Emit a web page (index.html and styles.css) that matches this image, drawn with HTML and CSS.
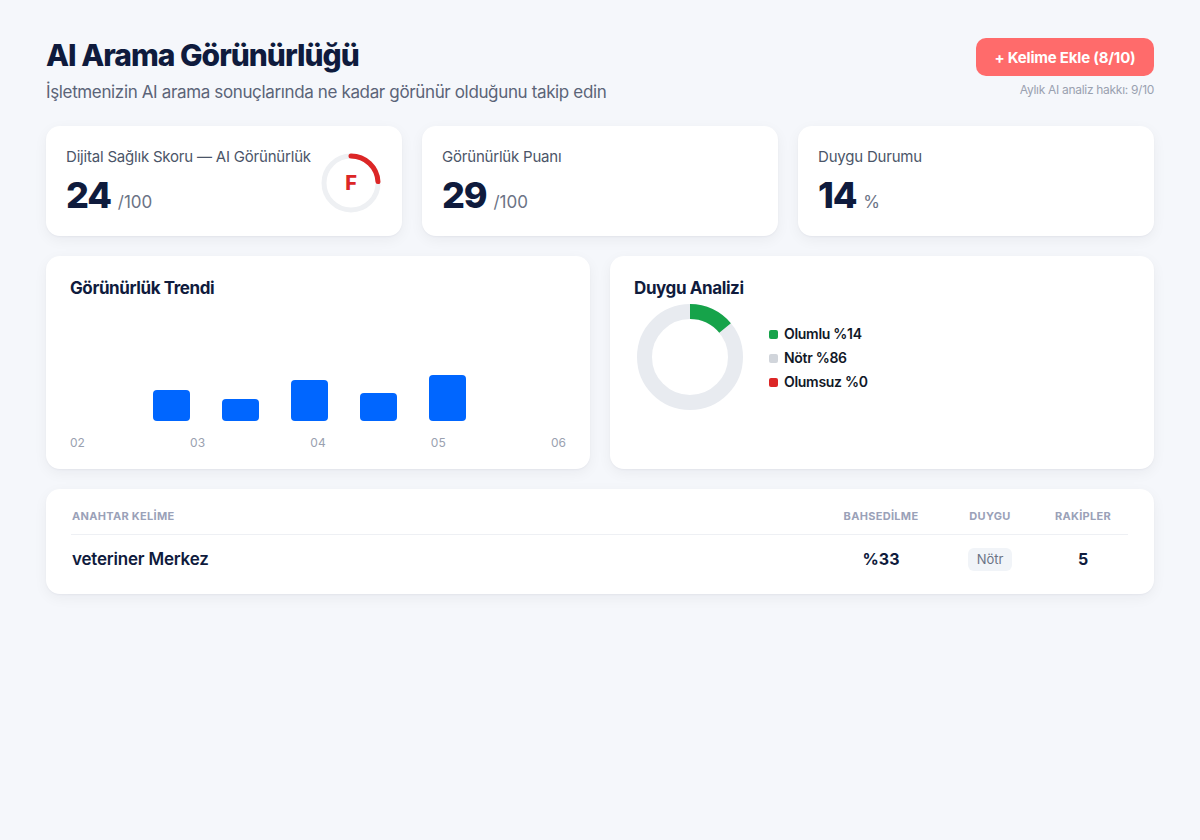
FILE: index.html
```html
<!DOCTYPE html>
<html lang="tr">
<head>
<meta charset="utf-8">
<title>AI Arama Görünürlüğü</title>
<link rel="stylesheet" href="styles.css">
</head>
<body>
<div class="page">
  <header class="top">
    <div class="titles">
      <h1 class="title">AI Arama Görünürlüğü</h1>
      <p class="subtitle">İşletmenizin AI arama sonuçlarında ne kadar görünür olduğunu takip edin</p>
    </div>
    <div class="actions">
      <button class="add-btn">+ Kelime Ekle (8/10)</button>
      <div class="quota">Aylık AI analiz hakkı: 9/10</div>
    </div>
  </header>

  <section class="stats">
    <div class="card stat">
      <div class="stat-body">
        <div class="stat-label">Dijital Sağlık Skoru — AI Görünürlük</div>
        <div class="stat-value"><span class="num">24</span><span class="unit">/100</span></div>
      </div>
      <div class="gauge">
        <svg width="62" height="62" viewBox="0 0 62 62">
          <circle cx="31" cy="31" r="27" fill="none" stroke="#eef0f3" stroke-width="5"/>
          <circle cx="31" cy="31" r="27" fill="none" stroke="#dc2626" stroke-width="5" stroke-linecap="round" stroke-dasharray="40.7 200" transform="rotate(-90 31 31)"/>
        </svg>
        <span class="grade">F</span>
      </div>
    </div>
    <div class="card stat">
      <div class="stat-body">
        <div class="stat-label">Görünürlük Puanı</div>
        <div class="stat-value"><span class="num">29</span><span class="unit">/100</span></div>
      </div>
    </div>
    <div class="card stat">
      <div class="stat-body">
        <div class="stat-label">Duygu Durumu</div>
        <div class="stat-value"><span class="num">14</span><span class="unit">%</span></div>
      </div>
    </div>
  </section>

  <section class="charts">
    <div class="card chart-card">
      <h2 class="card-title">Görünürlük Trendi</h2>
      <div class="bars">
        <div class="bar" style="height:31px"></div>
        <div class="bar" style="height:22px"></div>
        <div class="bar" style="height:41px"></div>
        <div class="bar" style="height:28px"></div>
        <div class="bar" style="height:46px"></div>
      </div>
      <div class="axis">
        <span>02</span><span>03</span><span>04</span><span>05</span><span>06</span>
      </div>
    </div>
    <div class="card chart-card">
      <h2 class="card-title">Duygu Analizi</h2>
      <div class="sentiment">
        <svg class="donut" width="106" height="106" viewBox="0 0 106 106">
          <circle cx="53" cy="53" r="45.5" fill="none" stroke="#e8ebf0" stroke-width="15"/>
          <circle cx="53" cy="53" r="45.5" fill="none" stroke="#16a34a" stroke-width="15" stroke-dasharray="40 300" transform="rotate(-90 53 53)"/>
        </svg>
        <ul class="legend">
          <li><span class="dot green"></span>Olumlu %14</li>
          <li><span class="dot grey"></span>Nötr %86</li>
          <li><span class="dot red"></span>Olumsuz %0</li>
        </ul>
      </div>
    </div>
  </section>

  <section class="card table-card">
    <div class="trow thead">
      <div class="c-key">ANAHTAR KELİME</div>
      <div class="c-mid">BAHSEDİLME</div>
      <div class="c-mid">DUYGU</div>
      <div class="c-mid">RAKİPLER</div>
    </div>
    <div class="trow tbody">
      <div class="c-key keyword">veteriner Merkez</div>
      <div class="c-mid strong">%33</div>
      <div class="c-mid"><span class="badge">Nötr</span></div>
      <div class="c-mid strong">5</div>
    </div>
  </section>
</div>
</body>
</html>
```
FILE: styles.css
```css
* { box-sizing: border-box; }
html, body { margin: 0; padding: 0; }
body {
  background: #f5f7fb;
  font-family: "Inter", "Noto Sans", sans-serif;
  color: #0f1b3d;
}
.page {
  width: 1200px;
  padding: 37px 46px 40px;
}
.top {
  display: flex;
  justify-content: space-between;
  align-items: flex-start;
}
.title {
  margin: 0;
  font-size: 30px;
  line-height: 36px;
  font-weight: 800;
  letter-spacing: -1px;
  color: #0f1b3d;
}
.subtitle {
  margin: 7px 0 0;
  font-size: 17px;
  line-height: 24px;
  color: #5b6478;
  letter-spacing: -0.36px;
}
.actions {
  display: flex;
  flex-direction: column;
  align-items: flex-end;
  padding-top: 1px;
}
.add-btn {
  width: 178px;
  height: 38px;
  border: none;
  border-radius: 10px;
  background: #ff6b6b;
  color: #fff;
  font-family: inherit;
  font-size: 15px;
  font-weight: 700;
  letter-spacing: -0.2px;
}
.quota {
  margin-top: 6px;
  font-size: 12px;
  line-height: 16px;
  color: #9aa1b0;
  letter-spacing: -0.3px;
}
.card {
  background: #fff;
  border-radius: 14px;
  box-shadow: 0 1px 2px rgba(16, 24, 40, 0.04), 0 4px 14px rgba(16, 24, 40, 0.05);
}
.stats {
  margin-top: 22px;
  display: grid;
  grid-template-columns: repeat(3, 1fr);
  gap: 20px;
}
.stat {
  height: 110px;
  padding: 21px 20px 0;
  display: flex;
  justify-content: space-between;
  align-items: flex-start;
}
.stat-label {
  font-size: 15px;
  line-height: 20px;
  color: #4b5568;
  letter-spacing: -0.2px;
}
.stat-value {
  margin-top: 8px;
  display: flex;
  align-items: baseline;
  gap: 7px;
  line-height: 40px;
}
.num {
  font-size: 36px;
  font-weight: 800;
  letter-spacing: -1.2px;
  color: #0f1b3d;
}
.unit {
  font-size: 17px;
  color: #6b7385;
}
.gauge {
  position: relative;
  width: 62px;
  height: 62px;
  margin-top: 5px;
}
.gauge svg { display: block; }
.grade {
  position: absolute;
  inset: 0;
  display: flex;
  align-items: center;
  justify-content: center;
  font-size: 20px;
  font-weight: 800;
  color: #dc2626;
}
.charts {
  margin-top: 20px;
  display: grid;
  grid-template-columns: 1fr 1fr;
  gap: 20px;
}
.chart-card {
  height: 213px;
  padding: 20px 24px 18px;
}
.card-title {
  margin: 0;
  font-size: 17px;
  line-height: 24px;
  font-weight: 700;
  letter-spacing: -0.4px;
  color: #0f1b3d;
}
.bars {
  height: 121px;
  display: flex;
  align-items: flex-end;
  gap: 32px;
  padding-left: 83px;
}
.bar {
  width: 37px;
  background: #0066ff;
  border-radius: 4px;
}
.axis {
  margin-top: 14px;
  display: flex;
  justify-content: space-between;
  font-size: 12px;
  line-height: 16px;
  color: #9aa1b0;
}
.sentiment {
  margin-top: 4px;
  margin-left: 3px;
  display: flex;
  align-items: center;
}
.donut { display: block; }
.legend {
  list-style: none;
  margin: 2px 0 0 26px;
  padding: 0;
}
.legend li {
  display: flex;
  align-items: center;
  gap: 6px;
  font-size: 14px;
  line-height: 24px;
  font-weight: 600;
  color: #111827;
  letter-spacing: -0.3px;
}
.dot {
  width: 9px;
  height: 9px;
  border-radius: 2px;
}
.dot.green { background: #16a34a; }
.dot.grey { background: #d1d5db; }
.dot.red { background: #dc2626; }
.table-card {
  margin-top: 20px;
  padding: 19px 26px 11px 25px;
}
.trow {
  display: grid;
  grid-template-columns: 1fr 122px 96px 90px;
  align-items: center;
}
.thead {
  padding-bottom: 10px;
  border-bottom: 1px solid #eef0f4;
  font-size: 11px;
  line-height: 16px;
  font-weight: 700;
  letter-spacing: 0.3px;
  color: #9aa1b8;
}
.tbody {
  padding: 12px 0;
}
.c-key { padding-left: 1px; }
.c-mid { text-align: center; }
.keyword {
  font-size: 17px;
  line-height: 24px;
  font-weight: 600;
  letter-spacing: -0.2px;
  color: #0f1b3d;
}
.strong {
  font-size: 16px;
  font-weight: 700;
  color: #0f1b3d;
}
.badge {
  display: inline-block;
  height: 23px;
  line-height: 23px;
  padding: 0 9px;
  border-radius: 6px;
  background: #f1f4f8;
  font-size: 13px;
  color: #6b7385;
}
```
